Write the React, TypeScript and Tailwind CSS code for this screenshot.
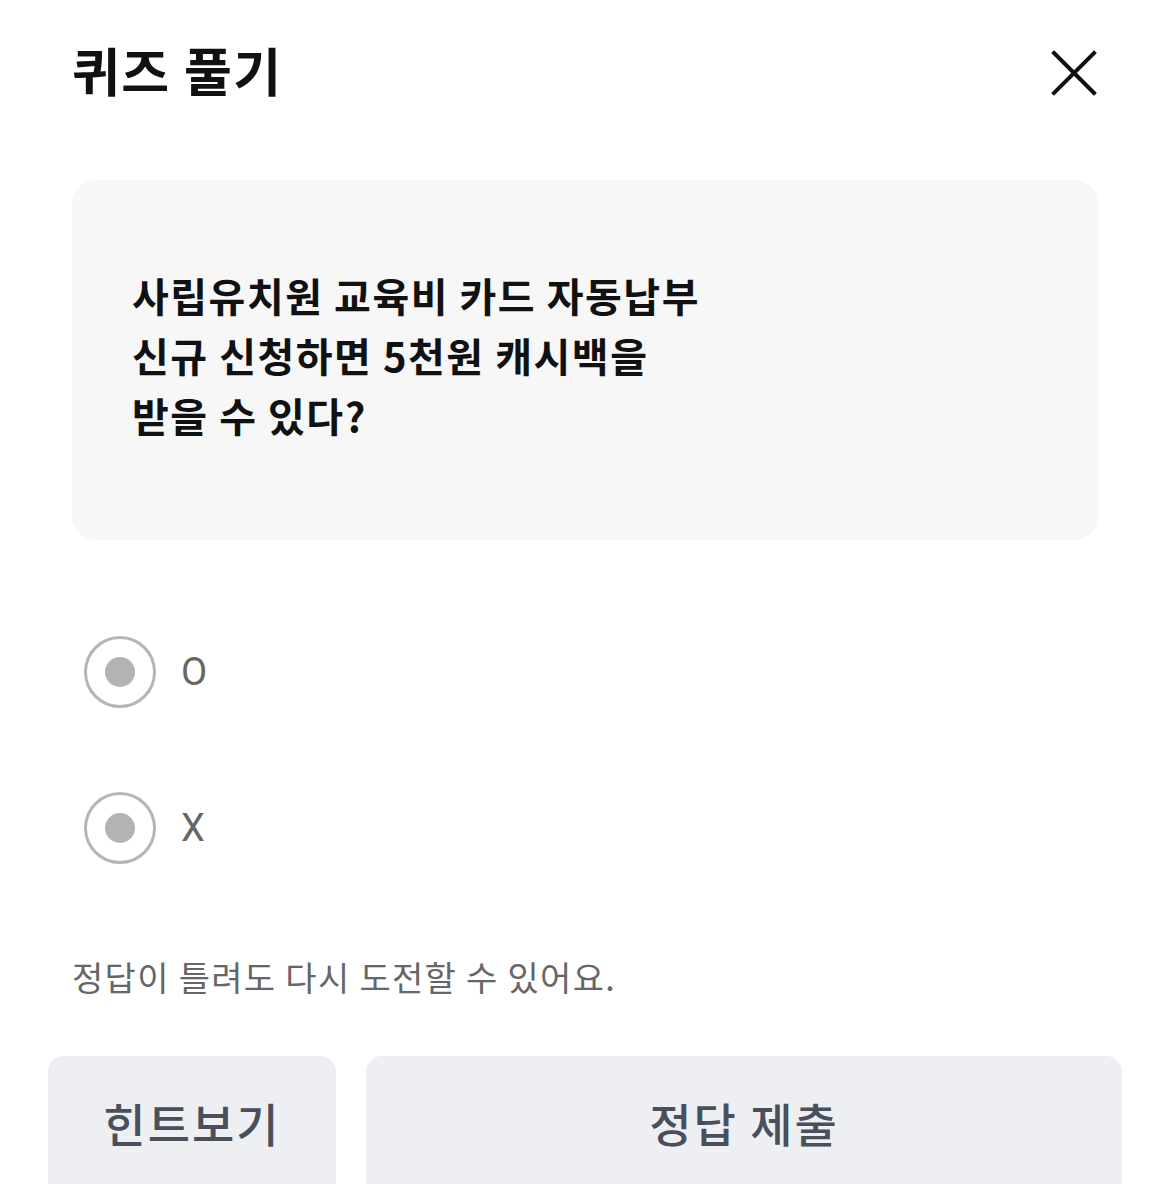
const FONT = { fontFamily: '"Noto Sans CJK KR", "Noto Sans", sans-serif' };

function Radio({ label }: { label: string }) {
  return (
    <div className="flex items-center h-[72px]">
      <span className="flex items-center justify-center w-[72px] h-[72px] rounded-full border-[3px] border-[#b5b5b5]">
        <span className="w-[30px] h-[30px] rounded-full bg-[#b3b3b3]" />
      </span>
      <span
        className="ml-[25px] text-[38px] font-normal text-[#666666] leading-none"
        style={{ fontFamily: 'Roboto, "Noto Sans CJK KR", sans-serif' }}
      >
        {label}
      </span>
    </div>
  );
}

export default function App() {
  return (
    <div className="w-[1170px] h-[1184px] bg-white overflow-hidden" style={FONT}>
      <div className="flex items-center justify-between pl-[72px] pr-[72px] pt-[30px] h-[110px]">
        <h1 className="text-[52px] font-bold tracking-[1.5px] text-[#111111] leading-none">퀴즈 풀기</h1>
        <svg width="48" height="48" viewBox="0 0 48 48" className="mr-0 mt-[6px]">
          <path d="M4 4 L44 44 M44 4 L4 44" stroke="#111" strokeWidth="4" strokeLinecap="square" />
        </svg>
      </div>

      <div className="mx-[72px] mt-[70px] h-[360px] rounded-[24px] bg-[#f7f7f7] pl-[60px] pt-[85px]">
        <p className="text-[40px] font-bold tracking-[1.5px] leading-[60px] text-[#111111]">
          사립유치원 교육비 카드 자동납부
          <br />
          신규 신청하면 5천원 캐시백을
          <br />
          받을 수 있다?
        </p>
      </div>

      <div className="ml-[84px] mt-[96px] flex flex-col gap-[84px]">
        <Radio label="O" />
        <Radio label="X" />
      </div>

      <p className="ml-[72px] mt-[96px] text-[34px] tracking-[1.3px] text-[#666666] leading-none">
        정답이 틀려도 다시 도전할 수 있어요.
      </p>

      <div className="flex gap-[30px] mx-[48px] mt-[62px]">
        <button className="w-[288px] h-[150px] shrink-0 rounded-t-[16px] bg-[#eeeff3] pb-[18px] text-[46px] font-medium tracking-[2px] text-[#4a4f5c]">
          힌트보기
        </button>
        <button className="flex-1 h-[150px] rounded-t-[16px] bg-[#eeeff3] pb-[18px] text-[46px] font-medium tracking-[2px] text-[#4a4f5c]">
          정답 제출
        </button>
      </div>
    </div>
  );
}
